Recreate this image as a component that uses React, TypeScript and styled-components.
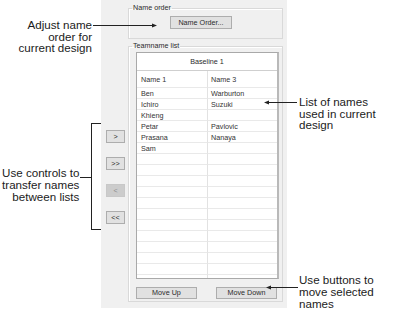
import React from "react";
import styled, { createGlobalStyle } from "styled-components";

const GlobalStyle = createGlobalStyle`
  html, body {
    margin: 0;
    padding: 0;
    background: #ffffff;
  }
  body {
    font-family: "Liberation Sans", Arial, sans-serif;
  }
`;

const Page = styled.div`
  display: flex;
  width: 394px;
  height: 323px;
  overflow: hidden;
  background: #ffffff;
`;

const NotesColumn = styled.div<{ $width: number }>`
  display: flex;
  flex-direction: column;
  width: ${({ $width }) => $width}px;
  flex-shrink: 0;
`;

const Note = styled.div<{ $align: "left" | "right"; $top: number }>`
  position: relative;
  margin-top: ${({ $top }) => $top}px;
  padding-left: ${({ $align }) => ($align === "left" ? 12 : 0)}px;
  font-size: 11.6px;
  line-height: 11.7px;
  color: #1b1b1b;
  text-align: ${({ $align }) => $align};
  white-space: nowrap;
`;

const AdjustNote = styled(Note)`
  padding-right: 9px;
`;

const TransferRow = styled.div`
  display: flex;
  align-items: flex-start;
  margin-top: 69px;
`;

const TransferText = styled(Note)`
  width: 86px;
  box-sizing: border-box;
  padding-right: 1px;
`;

const Tick = styled.div`
  width: 11px;
  margin-top: 54px;
  border-top: 1px solid #222;
`;

const Bracket = styled.div`
  width: 10px;
  height: 105px;
  border: 1px solid #222;
  border-right: none;
`;

const PointerSvg = styled.svg<{ $top: number; $left: number }>`
  position: absolute;
  top: ${({ $top }) => $top}px;
  left: ${({ $left }) => $left}px;
  overflow: visible;
`;

type PointerProps = { top: number; left: number; width: number; to: "left" | "right" };

const Pointer = ({ top, left, width, to }: PointerProps) => (
  <PointerSvg $top={top} $left={left} width={width} height={5} viewBox={`0 0 ${width} 5`}>
    {to === "right" ? (
      <>
        <line x1={0} y1={2.5} x2={width - 4} y2={2.5} stroke="#222" strokeWidth={1} />
        <polygon points={`${width - 5},0.5 ${width},2.5 ${width - 5},4.5`} fill="#222" />
      </>
    ) : (
      <>
        <line x1={4} y1={2.5} x2={width} y2={2.5} stroke="#222" strokeWidth={1} />
        <polygon points={`5,0.5 0,2.5 5,4.5`} fill="#222" />
      </>
    )}
  </PointerSvg>
);

const Panel = styled.div`
  display: grid;
  grid-template-columns: 27px 155px;
  grid-template-rows: auto auto;
  align-content: start;
  width: 186px;
  height: 308px;
  box-sizing: border-box;
  padding-right: 4px;
  background: #f0f0f0;
  font-size: 7.2px;
  color: #2a2a2a;
  flex-shrink: 0;
`;

const Group = styled.fieldset<{ $row: number; $top: number }>`
  grid-column: 2;
  grid-row: ${({ $row }) => $row};
  min-width: 0;
  margin: ${({ $top }) => $top}px 0 0;
  padding: 0;
  border: 1px solid #d9d9d9;
  box-shadow: inset 1px 1px 0 #ffffff;
`;

const Legend = styled.legend`
  margin-left: 3px;
  padding: 0 1px;
  font-size: 7.2px;
  line-height: 8px;
  color: #2a2a2a;
`;

const PushButton = styled.button<{ $w: number; $h: number; $off?: boolean }>`
  display: flex;
  align-items: center;
  justify-content: center;
  box-sizing: border-box;
  width: ${({ $w }) => $w}px;
  height: ${({ $h }) => $h}px;
  padding: 0;
  border: 1px solid ${({ $off }) => ($off ? "#c8c8c8" : "#adadad")};
  background: ${({ $off }) => ($off ? "#cccccc" : "#e1e1e1")};
  color: ${({ $off }) => ($off ? "#8e8e8e" : "#2b2b2b")};
  font-family: inherit;
  font-size: 7.2px;
  line-height: 1;
`;

const NameOrderButton = styled(PushButton)`
  margin: 4px 0 9px 41px;
`;

const SideButtons = styled.div`
  grid-column: 1;
  grid-row: 2;
  display: flex;
  flex-direction: column;
  gap: 14px;
  padding: 91px 0 0 5px;
`;

const ListView = styled.div`
  display: flex;
  flex-direction: column;
  height: 227px;
  box-sizing: border-box;
  margin: 2px 3px 0 7px;
  background: #ffffff;
  border: 1px solid #a9a9a9;
  border-right: 2px solid #b9b9b9;
  overflow: hidden;
`;

const GroupHeader = styled.div`
  display: flex;
  align-items: center;
  justify-content: center;
  height: 17px;
  flex-shrink: 0;
  border-bottom: 1px solid #cfcfcf;
`;

const Rows = styled.div`
  display: grid;
  grid-template-columns: 71px 1fr;
`;

const Cell = styled.div<{ $head?: boolean; $first?: boolean }>`
  display: flex;
  align-items: center;
  height: ${({ $head }) => ($head ? 16 : 10)}px;
  padding-left: ${({ $first }) => ($first ? 4 : 3)}px;
  border-bottom: 1px solid #e9e9e9;
  border-right: ${({ $first }) => ($first ? "1px solid #e2e2e2" : "none")};
  color: #333333;
  white-space: nowrap;
`;

const ButtonRow = styled.div`
  display: flex;
  justify-content: space-between;
  margin: 8px 5px 2px 7px;
`;

const names: [string, string][] = [
  ["Ben", "Warburton"],
  ["Ichiro", "Suzuki"],
  ["Khieng", ""],
  ["Petar", "Pavlovic"],
  ["Prasana", "Nanaya"],
  ["Sam", ""],
];

const rows: [string, string][] = [
  ...names,
  ...Array.from({ length: 13 }, (): [string, string] => ["", ""]),
];

const App: React.FC = () => {
  return (
    <>
      <GlobalStyle />
      <Page>
        <NotesColumn $width={101}>
          <AdjustNote $align="right" $top={19}>
            Adjust name
            <br />
            order for
            <br />
            current design
            <Pointer top={4} left={93} width={64} to="right" />
          </AdjustNote>
          <TransferRow>
            <TransferText $align="right" $top={44}>
              Use controls to
              <br />
              transfer names
              <br />
              between lists
            </TransferText>
            <Tick />
            <Bracket />
          </TransferRow>
        </NotesColumn>

        <Panel>
          <Group $row={1} $top={4}>
            <Legend>Name order</Legend>
            <NameOrderButton $w={62} $h={13}>
              Name Order...
            </NameOrderButton>
          </Group>

          <SideButtons>
            <PushButton $w={19} $h={13}>&gt;</PushButton>
            <PushButton $w={19} $h={13}>&gt;&gt;</PushButton>
            <PushButton $w={19} $h={13} $off>
              &lt;
            </PushButton>
            <PushButton $w={19} $h={13}>&lt;&lt;</PushButton>
          </SideButtons>

          <Group $row={2} $top={3}>
            <Legend>Teamname list</Legend>
            <ListView>
              <GroupHeader>Baseline 1</GroupHeader>
              <Rows>
                <Cell $head $first>
                  Name 1
                </Cell>
                <Cell $head>Name 3</Cell>
                {rows.map(([a, b], i) => (
                  <React.Fragment key={i}>
                    <Cell $first>{a}</Cell>
                    <Cell>{b}</Cell>
                  </React.Fragment>
                ))}
              </Rows>
            </ListView>
            <ButtonRow>
              <PushButton $w={61} $h={12}>Move Up</PushButton>
              <PushButton $w={61} $h={12}>Move Down</PushButton>
            </ButtonRow>
          </Group>
        </Panel>

        <NotesColumn $width={107}>
          <Note $align="left" $top={96}>
            List of names
            <br />
            used in current
            <br />
            design
            <Pointer top={4} left={-23} width={33} to="left" />
          </Note>
          <Note $align="left" $top={143}>
            Use buttons to
            <br />
            move selected
            <br />
            names
            <Pointer top={11} left={-21} width={32} to="left" />
          </Note>
        </NotesColumn>
      </Page>
    </>
  );
};

export default App;
